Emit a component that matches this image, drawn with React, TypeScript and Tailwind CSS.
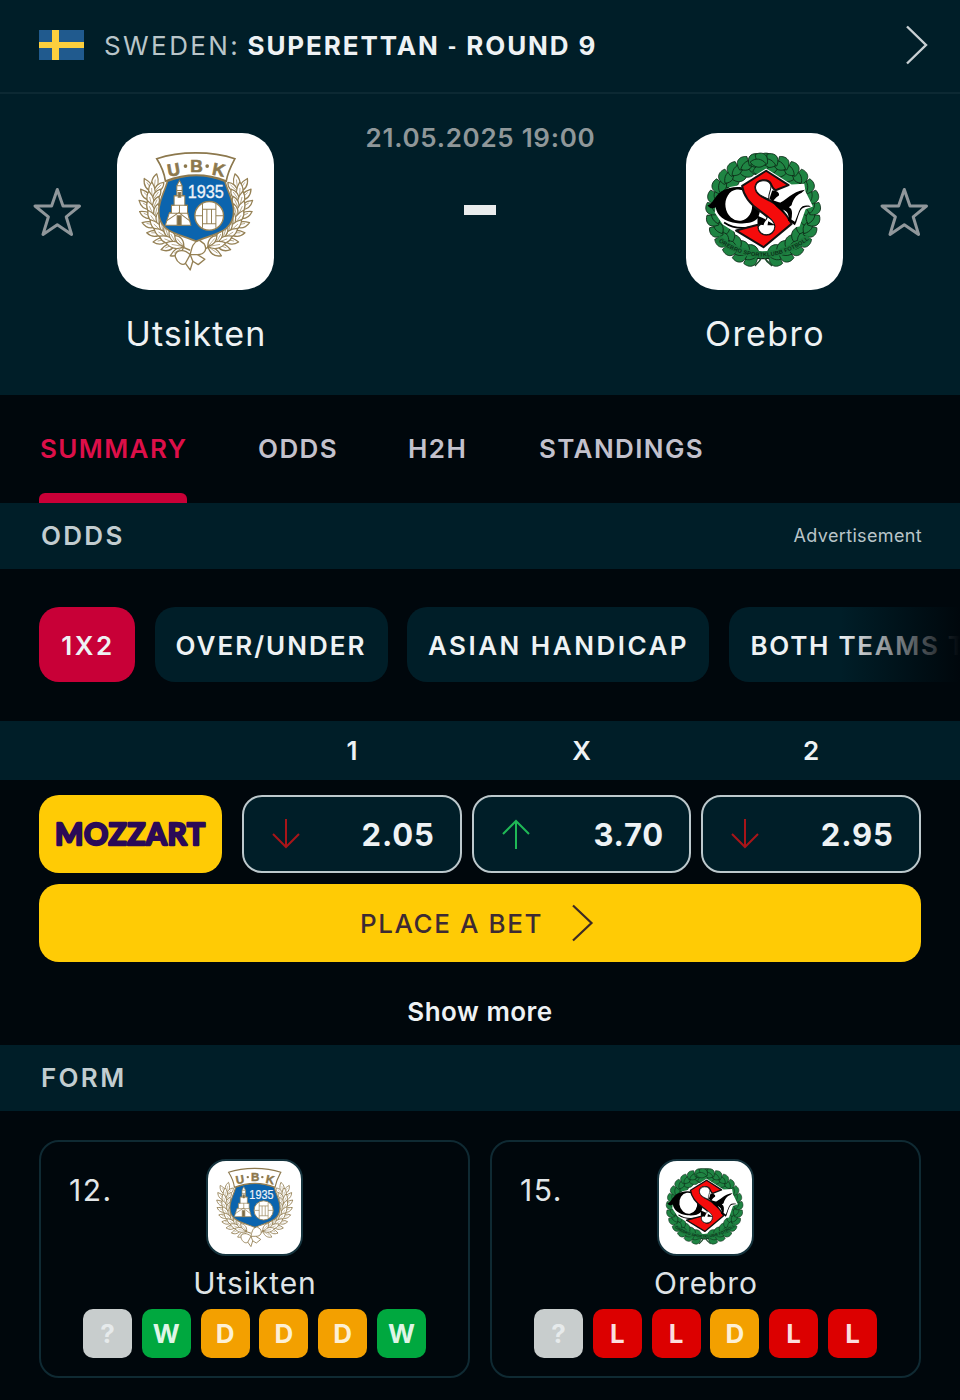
import React from 'react';

type Result = '?' | 'W' | 'D' | 'L';

interface TeamForm {
  position: string;
  name: string;
  crest: React.ReactNode;
  results: Result[];
}

interface Odd {
  label: string;
  value: string;
  direction: 'up' | 'down';
}

const resultColors: Record<Result, string> = {
  '?': 'bg-[#c8cdcd] text-[#e6eaeb]',
  W: 'bg-[#00a83f] text-[#dff5e6]',
  D: 'bg-[#f3a000] text-[#fdf0d6]',
  L: 'bg-[#dc0000] text-[#fbdede]',
};

const odds: Odd[] = [
  { label: '1', value: '2.05', direction: 'down' },
  { label: 'X', value: '3.70', direction: 'up' },
  { label: '2', value: '2.95', direction: 'down' },
];

const leafAngles = [-2, 9, 20, 31, 42, 53, 64, 75, 86];

const UtsiktenCrest: React.FC<{ className: string }> = ({ className }) => {
  const branch = (
    <g transform="translate(21 10) scale(0.92 0.95)">
      <path d="M128 165 C98 225 108 340 238 384" fill="none" strokeWidth="5" />
      {leafAngles.map((angle) => (
        <g key={angle} transform={`rotate(${-angle} 257 236)`}>
          <path d="M118 206 C92 200 84 184 86 164 C106 174 118 186 118 206Z" />
          <path d="M118 206 C104 184 110 160 126 148 C136 170 132 192 118 206Z" />
          <path d="M118 206 C122 186 134 176 150 174 C152 192 138 206 118 206Z" />
          <path d="M118 206 L95 176 M118 206 L122 166 M118 206 L142 182" strokeWidth="2" />
        </g>
      ))}
    </g>
  );
  return (
    <svg viewBox="21 24 470 470" className={className}>
      <g fill="#fff" stroke="#958155" strokeWidth="4" strokeLinejoin="round">
        {branch}
        <g transform="translate(514 0) scale(-1 1)">{branch}</g>
        <path d="M240 388 C218 366 190 378 196 396 C202 414 218 422 226 414 L240 434 L248 408 L264 418 L284 402 L262 388 C284 388 292 372 282 356 L266 344 C246 352 244 372 240 388Z" />
        <path d="M240 388 L226 414 M240 388 L262 388 M248 408 L240 388" />
      </g>
      <path
        d="M172 168 C228 146 290 146 344 168 C352 200 368 220 370 256 C372 322 314 324 258 348 C202 324 144 322 146 256 C148 220 164 200 172 168Z"
        fill="#0b64ae"
        stroke="#958155"
        strokeWidth="5"
      />
      <path
        d="M140 101 C208 78 306 78 374 101 C364 120 354 136 348 168 C290 145 226 145 166 168 C162 138 152 120 140 101Z"
        fill="#fff"
        stroke="#8c784d"
        strokeWidth="5"
      />
      <g fill="#8c784d" stroke="#8c784d" strokeWidth="2" fontFamily="Liberation Sans" fontWeight="700" fontSize="52" textAnchor="middle">
        <text transform="translate(194 152) rotate(-10)">U</text>
        <text x="259" y="142">B</text>
        <text transform="translate(322 152) rotate(11)">K</text>
      </g>
      <circle cx="226" cy="123" r="5.5" fill="#8c784d" />
      <circle cx="291" cy="123" r="5.5" fill="#8c784d" />
      <text x="233" y="219" textLength="108" lengthAdjust="spacingAndGlyphs" fill="#eef3f8" fontFamily="Liberation Sans" fontSize="54" stroke="#eef3f8" strokeWidth="1">
        1935
      </text>
      <g fill="#fff" stroke="#958155" strokeWidth="3">
        <path d="M208 166 L216 182 V212 H224 V240 H232 V262 L242 300 H166 L178 262 H184 V240 H192 V212 H200 V182Z" />
        <path d="M200 182 H216 M200 196 H216 M192 212 H224 M184 240 H232 M178 264 H236 M168 288 L206 262 L240 288 M208 240 V264" fill="none" />
        <path d="M204 202 h8 v14 h-8Z M201 272 h12 v28 h-12Z" fill="#7d6d49" />
        <circle cx="297" cy="272" r="43" strokeWidth="4" />
        <path d="M277 236 V308 M317 236 V308 M255 272 H277 M317 272 H339 M277 252 H317 M277 296 H317 M290 252 V296 M304 252 V296" fill="none" />
      </g>
    </svg>
  );
};

const wreathAngles = [4, 17, 30, 43, 56, 69, 82, 95, 108, 121, 134, 147, 160, 172];

const OrebroCrest: React.FC<{ className: string }> = ({ className }) => {
  const half = (
    <g>
      {wreathAngles.map((angle) => (
        <g key={angle} transform={`rotate(${angle} 249 256)`}>
          <path d="M242 396 C242 430 216 430 202 418 C208 394 226 384 242 396Z" />
          <path d="M246 386 C240 356 212 356 202 368 C210 392 230 398 246 386Z" />
          <path d="M238 396 C226 378 206 378 190 394 C204 410 222 410 238 396Z" />
        </g>
      ))}
    </g>
  );
  return (
    <svg viewBox="18 24 470 470" className={className}>
      <circle cx="249" cy="256" r="138" fill="none" stroke="#0d2b18" strokeWidth="16" />
      <g fill="#1f8443" stroke="#0d2b18" strokeWidth="2.4">
        {half}
        <g transform="translate(498 0) scale(-1 1)">{half}</g>
      </g>
      <path d="M224 422 Q240 408 248 390 Q258 408 276 422" fill="none" stroke="#1c4a2b" strokeWidth="5" />
      <path id="ribbon" d="M112 340 Q248 438 386 336" fill="none" stroke="#1d7a3e" strokeWidth="20" />
      <text fill="#0a2f18" fontFamily="Liberation Sans" fontWeight="700" fontSize="17" dy="6">
        <textPath href="#ribbon" startOffset="8" textLength="285">
          ÖREBRO SPORTKLUBB FOTBOLL
        </textPath>
      </text>
      {/* white backing behind the letters */}
      <path d="M258 130 L334 178 L372 176 L376 200 L398 244 L376 252 L358 304 L336 308 L252 372 L160 318 L128 298 L104 262 L112 212 L150 186 L180 180Z" fill="#fff" />
      {/* O */}
      <path d="M82 240 C104 242 100 188 172 186 C214 186 240 212 242 250 L234 278 C220 294 196 296 172 294 C132 290 110 270 107 246 C98 252 88 250 82 240Z" fill="#000" />
      <ellipse cx="176" cy="240" rx="40" ry="47" fill="#fff" transform="rotate(-8 176 240)" />
      <path d="M132 292 C164 314 206 310 240 298" fill="none" stroke="#000" strokeWidth="5" />
      {/* S */}
      <path
        d="M258 137 L325 180 L290 194 C284 198 278 190 272 176 C264 160 230 162 226 184 C224 204 246 216 268 226 C292 238 316 262 334 296 L250 366 L168 316 L236 298 C228 334 282 340 282 304 C280 288 262 274 240 258 C212 238 190 214 186 182Z"
        fill="#f50b0b"
        stroke="#111"
        strokeWidth="6"
        strokeLinejoin="round"
      />
      <path d="M226 186 C228 162 268 160 272 182 C274 196 264 202 266 222 C246 214 226 206 226 186Z" fill="#fff" stroke="#111" strokeWidth="3" />
      <path d="M234 306 C236 296 256 296 262 274 C276 284 284 292 284 304 C282 336 236 336 234 306Z" fill="#fff" stroke="#111" strokeWidth="3" />
      <path d="M232 272 L256 282 L250 300 L232 296Z M264 288 L286 300 L262 300Z" fill="#000" />
      {/* K */}
      <path d="M276 196 C292 196 302 204 294 218 L302 238 L312 266 L288 244 L268 220Z" fill="#000" />
      <path d="M288 238 C322 226 332 200 374 194 C358 208 350 218 342 230 C358 226 378 234 392 245 C372 244 364 248 358 262 C352 276 350 290 344 300 L324 286 C332 266 320 252 300 250Z" fill="#000" />
      <path d="M334 240 C340 218 352 206 368 202 C370 216 376 230 386 242 C368 238 360 246 354 264 L344 290 L332 282 C338 264 336 250 326 246Z" fill="#fff" />
      <path d="M280 226 C300 200 332 198 360 180 C350 194 330 206 314 220 L298 232Z" fill="#fff" />
      <path d="M300 246 C322 250 334 264 328 288" fill="none" stroke="#000" strokeWidth="9" />
    </svg>
  );
};

const StarIcon = () => (
  <svg viewBox="0 0 50 50" className="size-[50px]" fill="none" stroke="#90979b" strokeWidth="3" strokeLinejoin="round">
    <path d="M25.3 2.5 L31 19 H47.5 L34.2 29.8 L39.6 47.4 L25.3 37.8 L11 47.4 L16.4 29.8 L3 19 H19.6Z" />
  </svg>
);

const OddArrow: React.FC<{ direction: 'up' | 'down' }> = ({ direction }) => (
  <svg viewBox="0 0 28 30" className="h-[30px] w-7" fill="none" stroke={direction === 'up' ? '#1fb956' : '#a81519'} strokeWidth="2">
    {direction === 'up' ? <path d="M14 30 V2 M1 15 L14 2 L27 15" /> : <path d="M14 0 V28 M1 15 L14 28 L27 15" />}
  </svg>
);

const SectionTitle: React.FC<{ title: string; children?: React.ReactNode }> = ({ title, children }) => (
  <div className="flex h-[66px] items-center justify-between bg-[#001e28] pb-[2px] pl-[41px] pr-[38px]">
    <h2 className="text-[26px] font-semibold tracking-[2.3px] text-[#c2cdd0]">{title}</h2>
    {children}
  </div>
);

const FormCard: React.FC<TeamForm> = ({ position, name, crest, results }) => (
  <div className="relative flex h-[238px] w-[431px] flex-col items-center rounded-[20px] border-[2.5px] border-[#0f2a33] pt-[17px]">
    <span className="absolute left-[28px] top-[28px] text-[30px] leading-10 tracking-[1.5px] text-[#e2e6e8]">{position}</span>
    <div className="flex size-[97px] items-center justify-center overflow-hidden rounded-[20px] border-2 border-[#16343e] bg-white">
      {crest}
    </div>
    <p className="mt-[7px] pl-px text-[30px] leading-10 tracking-[0.9px] text-[#dfe3e6]">{name}</p>
    <div className="mt-[6px] flex gap-[9.8px]">
      {results.map((result, index) => (
        <span
          key={index}
          className={`flex size-[49px] items-center justify-center rounded-[10px] text-[26px] font-bold ${resultColors[result]}`}
        >
          {result}
        </span>
      ))}
    </div>
  </div>
);

const App: React.FC = () => {
  return (
    <div className="h-[1400px] w-[960px] overflow-hidden bg-[#00070c] font-['Inter',sans-serif] text-[#eef2f4]">
      <header className="flex h-[94px] items-center border-b-2 border-[#0c2933] bg-[#001e28] pl-[39px] pr-[31px]">
        <svg viewBox="0 0 45 30" className="mb-[2px] h-[30px] w-[45px]">
          <path d="M0 0h45v30H0z" fill="#205a8e" />
          <path d="M13 0h7v30h-7zM0 12h45v6H0z" fill="#fccf3d" />
        </svg>
        <p className="ml-[20px] whitespace-nowrap text-[26px] leading-8">
          <span className="tracking-[2.4px] text-[#b9c5c9]">SWEDEN:</span>{' '}
          <span className="font-bold tracking-[1.9px]">
            SUPERETTAN <span className="align-[2px] text-[18px] font-black leading-none">-</span> ROUND 9
          </span>
        </p>
        <svg viewBox="0 0 24 40" className="mb-[2px] ml-auto h-10 w-6" fill="none" stroke="#c8d0d3" strokeWidth="2.4">
          <path d="M2 1.5 L21 20 L2 38.5" />
        </svg>
      </header>

      <section className="flex h-[301px] justify-between bg-[#001e28] pl-8 pr-[31px]">
        <div className="flex">
          <div className="mt-[93px]">
            <StarIcon />
          </div>
          <div className="ml-[13px] mt-[39px] flex w-[200px] flex-col items-center">
            <div className="size-[157px] overflow-hidden rounded-[32px] bg-white">
              <UtsiktenCrest className="size-full" />
            </div>
            <p className="mt-[22px] pl-[2px] text-[34px] leading-[44px] tracking-[1.2px]">Utsikten</p>
          </div>
        </div>
        <div className="flex flex-col items-center pt-[28px]">
          <time className="whitespace-nowrap pl-px text-[26px] font-semibold leading-8 tracking-[0.7px] text-[#8f9799]">21.05.2025 19:00</time>
          <div className="mt-[51px] h-[10px] w-8 bg-[#e9eced]" />
        </div>
        <div className="flex">
          <div className="mr-[14px] mt-[39px] flex w-[200px] flex-col items-center">
            <div className="size-[157px] overflow-hidden rounded-[32px] bg-white">
              <OrebroCrest className="size-full" />
            </div>
            <p className="mt-[22px] text-[34px] leading-[44px] tracking-[1.4px]">Orebro</p>
          </div>
          <div className="mt-[93px]">
            <StarIcon />
          </div>
        </div>
      </section>

      <nav className="flex h-[108px] pl-[39px] text-[26px] font-semibold leading-8 tracking-[1.4px] text-[#c3c1cc]">
        <a className="flex w-[148px] flex-col justify-between pt-[38px] text-[#dd0f49]">
          <span className="pl-px">SUMMARY</span>
          <span className="h-[10px] rounded-t-[6px] bg-[#c80037]" />
        </a>
        <a className="ml-[71px] w-[150px] pt-[38px]">ODDS</a>
        <a className="w-[131px] pt-[38px]">H2H</a>
        <a className="pt-[38px]">STANDINGS</a>
      </nav>

      <SectionTitle title="ODDS">
        <span className="text-[18px] tracking-[0.35px] text-[#b9c5c9]">Advertisement</span>
      </SectionTitle>

      <div className="relative flex h-[152px] gap-[19.5px] overflow-hidden pl-[39px] pt-[38px] text-[26px] font-semibold">
        <button className="flex h-[75px] w-24 shrink-0 items-center justify-center rounded-[20px] bg-[#c80037] pl-[2px] pt-px tracking-[2.6px]">1X2</button>
        <button className="flex h-[75px] w-[233px] shrink-0 items-center justify-center rounded-[20px] bg-[#001e28] pt-px tracking-[2px]">OVER/UNDER</button>
        <button className="flex h-[75px] w-[302px] shrink-0 items-center justify-center rounded-[20px] bg-[#001e28] pl-px pt-px tracking-[2.5px]">
          ASIAN HANDICAP
        </button>
        <button className="flex h-[75px] w-[400px] shrink-0 items-center whitespace-nowrap rounded-[20px] bg-[#001e28] pl-[22px] pt-px tracking-[1.7px]">
          BOTH TEAMS TO SCORE
        </button>
        <div className="absolute inset-y-0 right-0 w-[120px] bg-linear-to-r from-transparent to-[#00070c]" />
      </div>

      <div className="flex h-[59px] items-center gap-[9.5px] bg-[#001e28] pl-[242px] text-[26px] font-semibold">
        {odds.map((odd) => (
          <span key={odd.label} className="w-[220px] text-center">
            {odd.label}
          </span>
        ))}
      </div>

      <div className="flex gap-[10px] pl-[39px] pt-[15px]">
        <div className="mr-[10px] flex h-[78px] w-[183px] items-center justify-center rounded-[20px] bg-[#ffcb05]">
          <svg viewBox="0 0 150 30" className="h-[30px] w-[150px] overflow-visible">
            <text
              x="-1"
              y="25.5"
              textLength="150"
              fill="#2b0a57"
              stroke="#2b0a57"
              strokeWidth="2.4"
              strokeLinejoin="round"
              strokeLinecap="round"
              fontFamily="Lato"
              fontWeight="700"
              fontSize="30"
            >
              MOZZART
            </text>
          </svg>
        </div>
        {odds.map((odd) => (
          <button
            key={odd.label}
            className="flex h-[78px] w-[219.5px] items-center justify-between rounded-[20px] border-[2.5px] border-[#bcc8cc] bg-[#001e28] pl-[28px] pr-[25px]"
          >
            <OddArrow direction={odd.direction} />
            <span className="pt-[2px] text-[31px] font-bold tracking-[0.8px]">{odd.value}</span>
          </button>
        ))}
      </div>

      <button className="ml-[39px] mt-[11px] flex h-[78px] w-[882px] items-center justify-center rounded-[20px] bg-[#ffcb05] pr-[6px] text-[26px] font-medium tracking-[1.6px] text-[#3d2a33]">
        PLACE A BET
        <svg viewBox="0 0 22 38" className="ml-[29px] h-[38px] w-[22px]" fill="none" stroke="#3d2a24" strokeWidth="2.2">
          <path d="M1 1.5 L19.5 19 L1 36.5" />
        </svg>
      </button>

      <div className="flex h-[83px] items-center justify-center pt-[16px] text-[26px] font-semibold tracking-[0.5px]">Show more</div>

      <SectionTitle title="FORM" />

      <div className="flex gap-5 pl-[39px] pt-[29px]">
        <FormCard
          position="12."
          name="Utsikten"
          crest={<UtsiktenCrest className="size-[105px] shrink-0" />}
          results={['?', 'W', 'D', 'D', 'D', 'W']}
        />
        <FormCard
          position="15."
          name="Orebro"
          crest={<OrebroCrest className="size-[105px] shrink-0" />}
          results={['?', 'L', 'L', 'D', 'L', 'L']}
        />
      </div>
    </div>
  );
};

export default App;
